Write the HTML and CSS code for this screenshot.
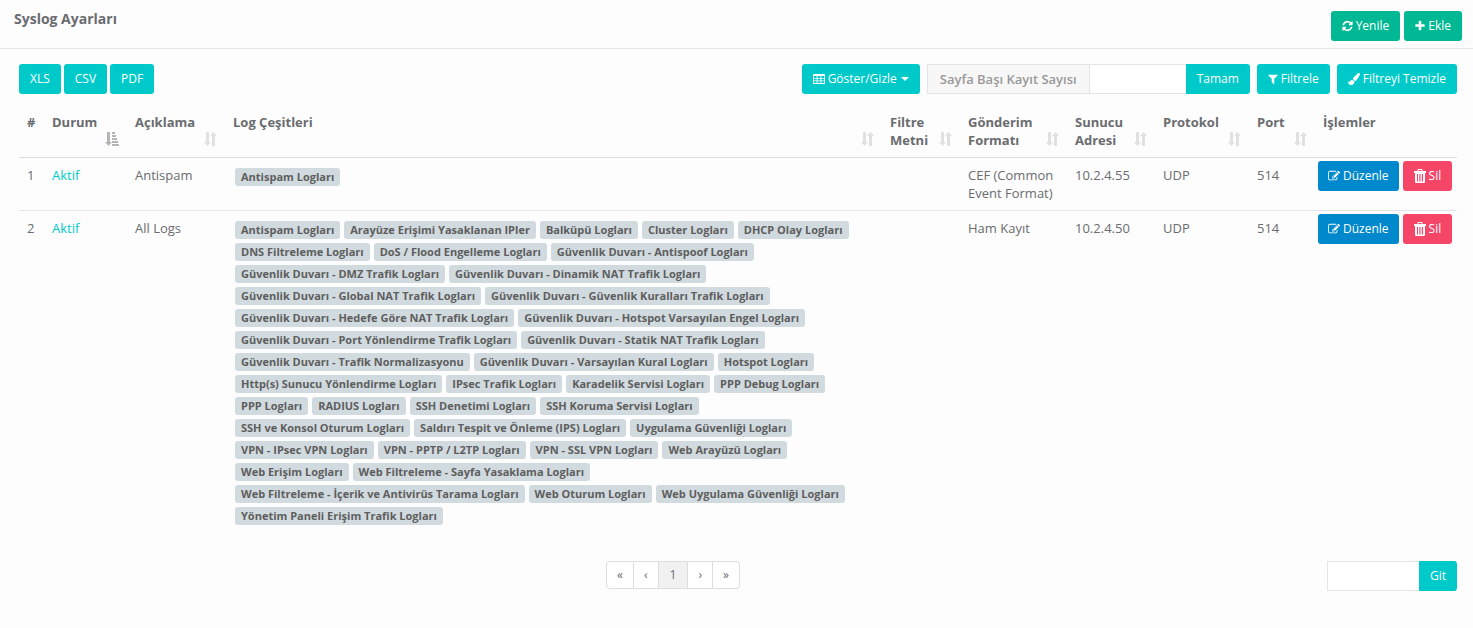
FILE: index.html
```html
<!DOCTYPE html>
<html lang="tr">
<head>
<meta charset="utf-8">
<title>Syslog Ayarları</title>
<link rel="stylesheet" href="styles.css">
</head>
<body>
<svg class="sprite" aria-hidden="true">
  <symbol id="i-refresh" viewBox="128 0 1536 1792"><path d="M1639 1056q0 5-1 7-64 268-268 434.500t-478 166.500q-146 0-282.500-55t-243.500-157l-129 129q-19 19-45 19t-45-19-19-45v-448q0-26 19-45t45-19h448q26 0 45 19t19 45-19 45l-137 137q71 66 161 102t187 36q134 0 250-65t186-179q11-17 53-117 8-23 30-23h192q13 0 22.500 9.500t9.500 22.500zm25-800v448q0 26-19 45t-45 19h-448q-26 0-45-19t-19-45 19-45l138-138q-148-137-349-137-134 0-250 65t-186 179q-11 17-53 117-8 23-30 23h-199q-13 0-22.500-9.500t-9.500-22.500v-7q65-268 270-434.500t480-166.500q146 0 284 55.500t245 156.500l130-129q19-19 45-19t45 19 19 45z"/></symbol>
  <symbol id="i-plus" viewBox="192 0 1408 1792"><path d="M1600 736v192q0 40-28 68t-68 28h-416v416q0 40-28 68t-68 28h-192q-40 0-68-28t-28-68v-416h-416q-40 0-68-28t-28-68v-192q0-40 28-68t68-28h416v-416q0-40 28-68t68-28h192q40 0 68 28t28 68v416h416q40 0 68 28t28 68z"/></symbol>
  <symbol id="i-table" viewBox="0 0 12 12"><path fill-rule="evenodd" d="M1 1h10q1 0 1 1v8q0 1-1 1h-10q-1 0-1-1v-8q0-1 1-1zM1 3v2h2.700v-2zM4.600 3v2h2.800v-2zM8.300 3v2h2.700v-2zM1 5.800v1.700h2.700v-1.700zM4.600 5.800v1.700h2.800v-1.700zM8.300 5.800v1.700h2.700v-1.700zM1 8.300v1.700h2.700v-1.700zM4.600 8.300v1.700h2.800v-1.700zM8.300 8.300v1.700h2.700v-1.700z"/></symbol>
  <symbol id="i-filter" viewBox="192 0 1408 1792"><path d="M1595 295q17 41-14 70l-493 493v742q0 42-39 59-13 5-25 5-27 0-45-19l-256-256q-19-19-19-45v-486l-493-493q-31-29-14-70 17-39 59-39h1280q42 0 59 39z"/></symbol>
  <symbol id="i-brush" viewBox="0 0 1792 1792"><path d="M1615 0q70 0 122.500 46.500t52.500 116.500q0 63-45 151-332 629-465 752-97 91-218 91-126 0-216.500-92.500t-90.500-219.500q0-128 92-212l638-579q59-54 130-54zm-909 1034q39 76 106.500 130t150.500 76l1 71q4 213-129.500 347t-348.500 134q-123 0-218-46.500t-152.500-127.500-86.500-183-29-220q7 5 41 30t62 44.500 59 36.500 46 17q41 0 55-37 25-66 57.500-112.500t69.500-76 88-47.500 103-25.500 125-10.500z"/></symbol>
  <symbol id="i-edit" viewBox="0 0 1792 1792"><path d="M888 1184l116-116-152-152-116 116v56h96v96h56zm440-720q-16-16-33 1l-350 350q-17 17-1 33t33-1l350-350q17-17 1-33zm80 594v190q0 119-84.500 203.500t-203.500 84.500h-832q-119 0-203.500-84.500t-84.500-203.500v-832q0-119 84.500-203.500t203.500-84.500h832q63 0 117 25 15 7 18 23 3 17-9 29l-49 49q-14 14-32 8-23-6-45-6h-832q-66 0-113 47t-47 113v832q0 66 47 113t113 47h832q66 0 113-47t47-113v-126q0-13 9-22l64-64q15-15 35-7t20 29zm-96-738l288 288-672 672h-288v-288zm444 132l-92 92-288-288 92-92q28-28 68-28t68 28l152 152q28 28 28 68t-28 68z"/></symbol>
  <symbol id="i-trash" viewBox="0 0 12 14"><path fill-rule="evenodd" d="M0 2h3.500v-1q0-1 1-1h3q1 0 1 1v1h3.500v2h-12zM4.500 1v1h3v-1zM1 4h10v9q0 1-1 1h-8q-1 0-1-1zM3 5v7.500h1v-7.500zM5 5v7.500h.7v-7.500zM6.500 5v7.500h.7v-7.500zM8 5v7.500h1v-7.500z"/></symbol>
  <symbol id="i-sort" viewBox="0 0 13 14"><path d="M2 0h3v10h2l-3.500 4-3.500-4h2zM8 14h3v-10h2l-3.500-4-3.500 4h2z"/></symbol>
  <symbol id="i-sort-asc" viewBox="0 0 14 14"><path d="M2 0h3v10h2l-3.500 4-3.500-4h2zM7 0h3v2h-3zM7 3h4v2h-4zM7 6h5v2h-5zM7 9h6v2h-6zM7 12h7v2h-7z"/></symbol>
</svg>

<header class="page-head">
  <h1 class="page-title">Syslog Ayarları</h1>
  <div class="head-actions">
    <button type="button" class="btn btn-green"><svg class="icon icon-medium"><use href="#i-refresh"/></svg>Yenile</button>
    <button type="button" class="btn btn-green"><svg class="icon icon-narrow"><use href="#i-plus"/></svg>Ekle</button>
  </div>
</header>

<main class="content">
  <div class="toolbar">
    <div class="exports">
      <button type="button" class="btn btn-teal">XLS</button>
      <button type="button" class="btn btn-teal">CSV</button>
      <button type="button" class="btn btn-teal">PDF</button>
    </div>
    <div class="tools">
      <button type="button" class="btn btn-teal"><svg class="icon"><use href="#i-table"/></svg>Göster/Gizle<span class="caret"></span></button>
      <div class="input-group">
        <label class="addon" for="page-size">Sayfa Başı Kayıt Sayısı</label>
        <input class="field" id="page-size" type="text">
        <button type="button" class="btn btn-teal btn-end">Tamam</button>
      </div>
      <button type="button" class="btn btn-teal"><svg class="icon icon-narrow"><use href="#i-filter"/></svg>Filtrele</button>
      <button type="button" class="btn btn-teal"><svg class="icon"><use href="#i-brush"/></svg>Filtreyi Temizle</button>
    </div>
  </div>

  <table class="grid">
    <colgroup>
      <col class="c-no"><col class="c-state"><col class="c-desc"><col><col class="c-filter"><col class="c-format"><col class="c-server"><col class="c-proto"><col class="c-port"><col class="c-actions">
    </colgroup>
    <thead>
      <tr>
        <th>#</th>
        <th>Durum<svg class="sort sort-on"><use href="#i-sort-asc"/></svg></th>
        <th>Açıklama<svg class="sort"><use href="#i-sort"/></svg></th>
        <th>Log Çeşitleri<svg class="sort"><use href="#i-sort"/></svg></th>
        <th>Filtre<br>Metni<svg class="sort"><use href="#i-sort"/></svg></th>
        <th>Gönderim<br>Formatı<svg class="sort"><use href="#i-sort"/></svg></th>
        <th>Sunucu<br>Adresi<svg class="sort"><use href="#i-sort"/></svg></th>
        <th>Protokol<svg class="sort"><use href="#i-sort"/></svg></th>
        <th>Port<svg class="sort"><use href="#i-sort"/></svg></th>
        <th>İşlemler</th>
      </tr>
    </thead>
    <tbody>
      <tr>
        <td>1</td>
        <td><a class="state" href="#">Aktif</a></td>
        <td>Antispam</td>
        <td><div class="tags"><span class="tag">Antispam Logları</span></div></td>
        <td></td>
        <td>CEF (Common Event Format)</td>
        <td>10.2.4.55</td>
        <td>UDP</td>
        <td>514</td>
        <td class="actions"><div class="action-row">
          <button type="button" class="btn btn-blue"><svg class="icon"><use href="#i-edit"/></svg>Düzenle</button>
          <button type="button" class="btn btn-red"><svg class="icon icon-trash"><use href="#i-trash"/></svg>Sil</button>
        </div></td>
      </tr>
      <tr>
        <td>2</td>
        <td><a class="state" href="#">Aktif</a></td>
        <td>All Logs</td>
        <td><div class="tags">
          <span class="tag">Antispam Logları</span>
          <span class="tag">Arayüze Erişimi Yasaklanan IPler</span>
          <span class="tag">Balküpü Logları</span>
          <span class="tag">Cluster Logları</span>
          <span class="tag">DHCP Olay Logları</span>
          <span class="tag">DNS Filtreleme Logları</span>
          <span class="tag">DoS / Flood Engelleme Logları</span>
          <span class="tag">Güvenlik Duvarı - Antispoof Logları</span>
          <span class="tag">Güvenlik Duvarı - DMZ Trafik Logları</span>
          <span class="tag">Güvenlik Duvarı - Dinamik NAT Trafik Logları</span>
          <span class="tag">Güvenlik Duvarı - Global NAT Trafik Logları</span>
          <span class="tag">Güvenlik Duvarı - Güvenlik Kuralları Trafik Logları</span>
          <span class="tag">Güvenlik Duvarı - Hedefe Göre NAT Trafik Logları</span>
          <span class="tag">Güvenlik Duvarı - Hotspot Varsayılan Engel Logları</span>
          <span class="tag">Güvenlik Duvarı - Port Yönlendirme Trafik Logları</span>
          <span class="tag">Güvenlik Duvarı - Statik NAT Trafik Logları</span>
          <span class="tag">Güvenlik Duvarı - Trafik Normalizasyonu</span>
          <span class="tag">Güvenlik Duvarı - Varsayılan Kural Logları</span>
          <span class="tag">Hotspot Logları</span>
          <span class="tag">Http(s) Sunucu Yönlendirme Logları</span>
          <span class="tag">IPsec Trafik Logları</span>
          <span class="tag">Karadelik Servisi Logları</span>
          <span class="tag">PPP Debug Logları</span>
          <span class="tag">PPP Logları</span>
          <span class="tag">RADIUS Logları</span>
          <span class="tag">SSH Denetimi Logları</span>
          <span class="tag">SSH Koruma Servisi Logları</span>
          <span class="tag">SSH ve Konsol Oturum Logları</span>
          <span class="tag">Saldırı Tespit ve Önleme (IPS) Logları</span>
          <span class="tag">Uygulama Güvenliği Logları</span>
          <span class="tag">VPN - IPsec VPN Logları</span>
          <span class="tag">VPN - PPTP / L2TP Logları</span>
          <span class="tag">VPN - SSL VPN Logları</span>
          <span class="tag">Web Arayüzü Logları</span>
          <span class="tag">Web Erişim Logları</span>
          <span class="tag">Web Filtreleme - Sayfa Yasaklama Logları</span>
          <span class="tag">Web Filtreleme - İçerik ve Antivirüs Tarama Logları</span>
          <span class="tag">Web Oturum Logları</span>
          <span class="tag">Web Uygulama Güvenliği Logları</span>
          <span class="tag">Yönetim Paneli Erişim Trafik Logları</span>
        </div></td>
        <td></td>
        <td>Ham Kayıt</td>
        <td>10.2.4.50</td>
        <td>UDP</td>
        <td>514</td>
        <td class="actions"><div class="action-row">
          <button type="button" class="btn btn-blue"><svg class="icon"><use href="#i-edit"/></svg>Düzenle</button>
          <button type="button" class="btn btn-red"><svg class="icon icon-trash"><use href="#i-trash"/></svg>Sil</button>
        </div></td>
      </tr>
    </tbody>
  </table>

  <footer class="foot">
    <nav class="pager" aria-label="Sayfalar">
      <a href="#">«</a>
      <a href="#">‹</a>
      <a href="#" class="current" aria-current="page">1</a>
      <a href="#">›</a>
      <a href="#">»</a>
    </nav>
    <div class="input-group goto">
      <input class="field" type="text" aria-label="Sayfa numarası">
      <button type="button" class="btn btn-teal btn-end">Git</button>
    </div>
  </footer>
</main>
</body>
</html>
```
FILE: styles.css
```css
* { box-sizing: border-box; }

body {
  margin: 0;
  background: #fdfdfd;
  color: #6a6c6f;
  font: 13px/18px "Open Sans", "Noto Sans", sans-serif;
}

.sprite { display: none; }

.page-head {
  display: flex;
  justify-content: space-between;
  align-items: flex-start;
  padding: 10px 11px 7px 14px;
  border-bottom: 1px solid #e4e5e7;
}
.page-title { margin: 0; font-size: 14px; line-height: 18px; font-weight: 700; }
.head-actions { display: flex; gap: 4px; padding-top: 1px; }

.btn {
  display: inline-flex;
  align-items: center;
  height: 30px;
  padding: 0 11px;
  border: 0;
  border-radius: 3px;
  color: #fff;
  font: 12px/18px "Open Sans", "Noto Sans", sans-serif;
  white-space: nowrap;
}
.btn-green { background: #00b894; }
.btn-teal { background: #00cac9; }
.btn-blue { padding: 0 10px; background: #0088cc; }
.btn-red { background: #f64668; }
.btn-end { border-radius: 0 3px 3px 0; }

.icon { width: 12px; height: 12px; margin-right: 3px; fill: currentColor; }
.icon-medium { width: 11px; }
.icon-narrow { width: 10px; }
.icon-trash { height: 14px; }
.caret {
  margin-left: 4px;
  border: 4px solid transparent;
  border-top-color: currentColor;
  border-bottom: 0;
}

.content { padding: 15px 16px 0 19px; }
.toolbar { display: flex; justify-content: space-between; }
.exports { display: flex; gap: 3px; }
.tools { display: flex; gap: 7px; }

.input-group { display: flex; }
.addon {
  padding: 5px 12px;
  border: 1px solid #e4e5e7;
  border-right: 0;
  background: #f7f7f7;
  color: #999;
  font-weight: 600;
}
.field {
  width: 97px;
  height: 30px;
  padding: 4px 8px;
  border: 1px solid #e4e5e7;
  border-right: 0;
  background: #fff;
  font: inherit;
}

.grid {
  width: 100%;
  margin-top: 11px;
  border-collapse: collapse;
  table-layout: fixed;
}
.c-no { width: 25px; }
.c-state { width: 83px; }
.c-desc { width: 98px; }
.c-filter { width: 78px; }
.c-format { width: 107px; }
.c-server { width: 88px; }
.c-proto { width: 94px; }
.c-port { width: 66px; }
.c-actions { width: 142px; }

.grid th,
.grid td { padding: 8px; text-align: left; vertical-align: top; }
.grid th { position: relative; font-weight: 700; border-bottom: 1px solid #ddd; }
.grid td { border-bottom: 1px solid #e4e5e7; }
.grid tbody tr:last-child td { border-bottom: 0; }
.sort { position: absolute; right: 8px; bottom: 11px; width: 13px; height: 14px; fill: #e1e1e1; }
.sort-on { width: 14px; fill: #b4b5b7; }
.state { color: #00cac9; text-decoration: none; }

.tags { display: flex; flex-wrap: wrap; gap: 4px; padding: 2px; }
.tag {
  padding: 0 6px;
  border-radius: 3px;
  background: #d1dade;
  color: #5e5e5e;
  font-size: 11px;
  font-weight: 700;
  line-height: 18px;
}

.grid .actions { padding: 3px; }
.action-row { display: flex; gap: 4px; }

.foot {
  display: flex;
  align-items: flex-start;
  margin-top: 26px;
}
.pager { flex: 1; display: flex; justify-content: center; }
.pager a {
  padding: 4px 10px;
  border: 1px solid #ddd;
  border-left-width: 0;
  background: #fff;
  color: #6a6c6f;
  font-size: 12px;
  text-decoration: none;
}
.pager a:first-child { border-left-width: 1px; border-radius: 4px 0 0 4px; }
.pager a:last-child { border-radius: 0 4px 4px 0; }
.pager .current { padding: 4px 11px; background: #f1f1f1; }
.goto .field { width: 92px; }
```
